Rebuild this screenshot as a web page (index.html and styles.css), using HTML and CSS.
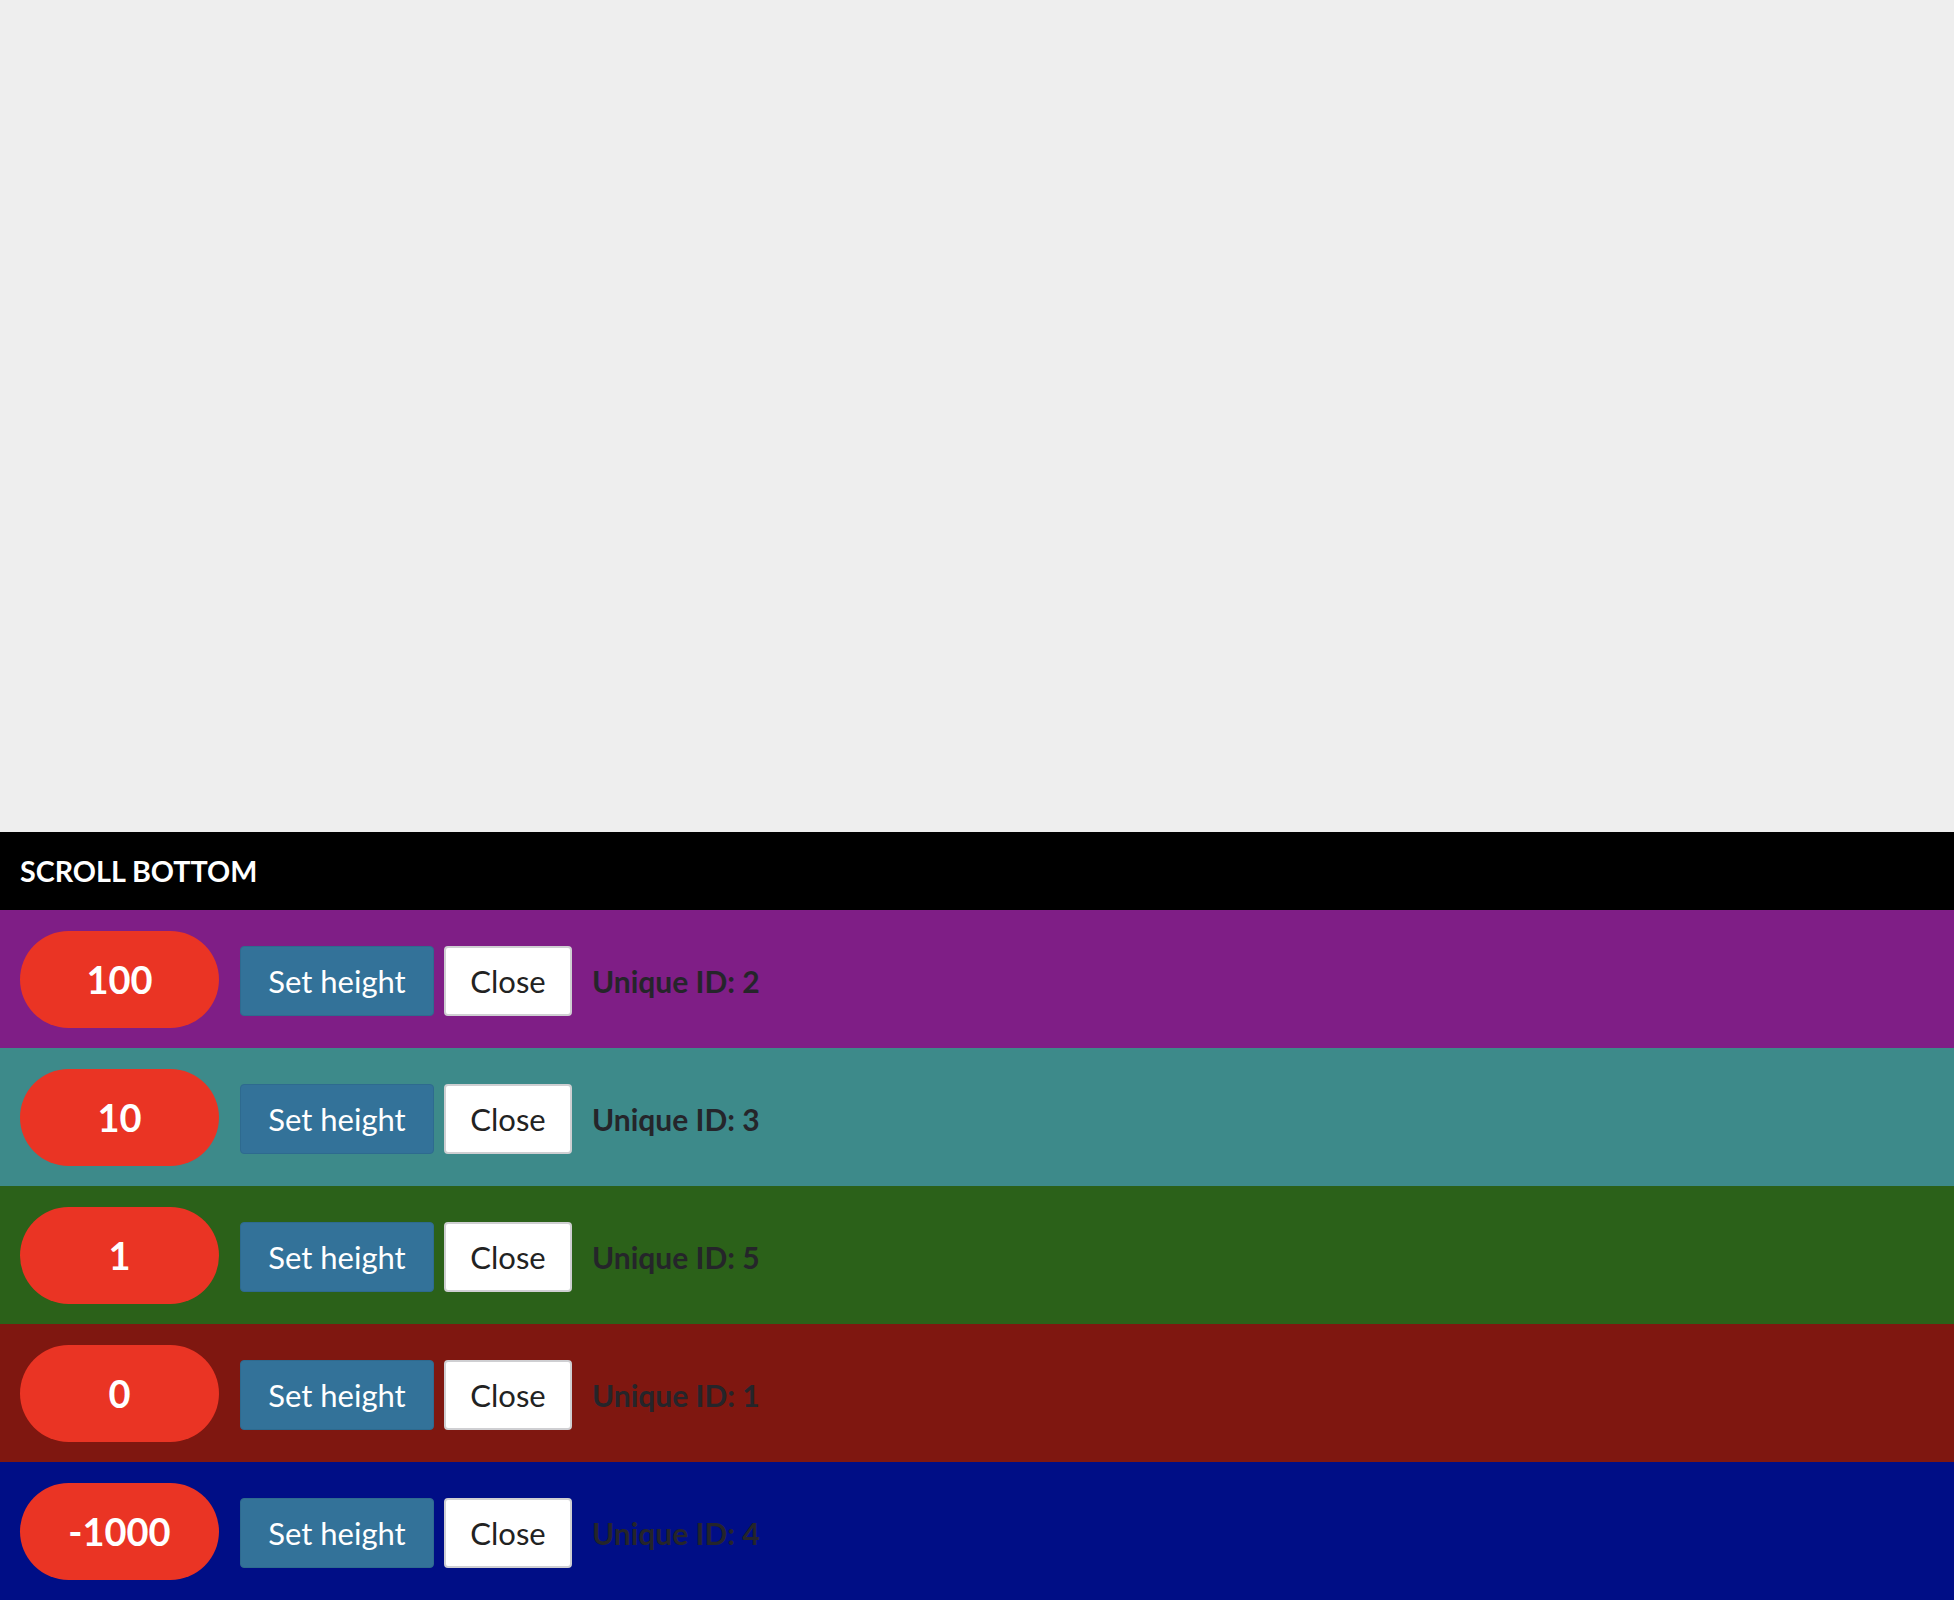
FILE: index.html
```html
<!DOCTYPE html>
<html>
<head>
<meta charset="utf-8">
<link rel="stylesheet" href="styles.css">
</head>
<body>
<div class="page">
  <div class="spacer"></div>
  <div class="header">SCROLL BOTTOM</div>
  <div class="row purple">
    <div class="pill">100</div>
    <button class="btn btn-set">Set height</button>
    <button class="btn btn-close">Close</button>
    <span class="uid">Unique ID: 2</span>
  </div>
  <div class="row teal">
    <div class="pill">10</div>
    <button class="btn btn-set">Set height</button>
    <button class="btn btn-close">Close</button>
    <span class="uid">Unique ID: 3</span>
  </div>
  <div class="row green">
    <div class="pill">1</div>
    <button class="btn btn-set">Set height</button>
    <button class="btn btn-close">Close</button>
    <span class="uid">Unique ID: 5</span>
  </div>
  <div class="row maroon">
    <div class="pill">0</div>
    <button class="btn btn-set">Set height</button>
    <button class="btn btn-close">Close</button>
    <span class="uid">Unique ID: 1</span>
  </div>
  <div class="row navy">
    <div class="pill">-1000</div>
    <button class="btn btn-set">Set height</button>
    <button class="btn btn-close">Close</button>
    <span class="uid">Unique ID: 4</span>
  </div>
</div>
</body>
</html>
```
FILE: styles.css
```css
html, body {
  margin: 0;
  padding: 0;
  background: #eeeeee;
  font-family: Lato, "Open Sans", sans-serif;
}
.page {
  min-height: 100vh;
  display: flex;
  flex-direction: column;
}
.spacer {
  flex: 1;
}
.header {
  background: #000;
  color: #fff;
  height: 78px;
  box-sizing: border-box;
  padding: 0 20px;
  display: flex;
  align-items: center;
  font-size: 28.7px;
  font-weight: 700;
}
.row {
  height: 138px;
  box-sizing: border-box;
  padding: 20px;
  display: flex;
  align-items: center;
}
.purple { background: #7f1e86; }
.teal { background: #3d8a8a; }
.green { background: #2b6119; }
.maroon { background: #7f1710; }
.navy { background: #000e86; }
.pill {
  width: 199px;
  height: 97px;
  border-radius: 49px;
  background: #ea3424;
  color: #fff;
  font-size: 38px;
  font-weight: 700;
  display: flex;
  align-items: center;
  justify-content: center;
  flex-shrink: 0;
}
.btn {
  height: 70px;
  box-sizing: border-box;
  font-family: inherit;
  font-size: 31px;
  border-radius: 4px;
  padding: 0;
  margin: 4px 0 0 0;
  cursor: pointer;
  display: flex;
  align-items: center;
  justify-content: center;
}
.btn-set {
  width: 194px;
  margin-left: 21px;
  background: #337299;
  color: #fff;
  border: 1px solid #2e6a8f;
}
.btn-close {
  width: 128px;
  margin-left: 10px;
  background: #fff;
  color: #222;
  border: 2px solid #cfcfd2;
}
.uid {
  margin-left: 20px;
  margin-top: 4px;
  font-size: 30px;
  font-weight: 700;
  color: #25252a;
}
```
